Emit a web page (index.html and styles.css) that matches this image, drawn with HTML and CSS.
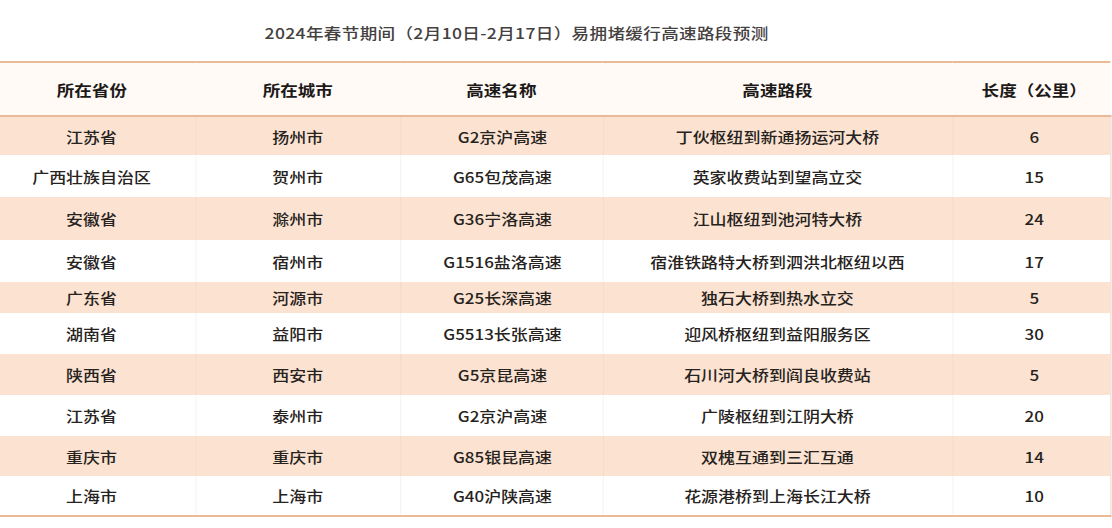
FILE: index.html
```html
<!DOCTYPE html>
<html lang="zh-CN">
<head>
<meta charset="utf-8">
<title>2024年春节期间易拥堵缓行高速路段预测</title>
<link rel="stylesheet" href="styles.css">
</head>
<body>
<div class="page">
  <h1 class="title">2024年春节期间（2月10日-2月17日）易拥堵缓行高速路段预测</h1>
  <table class="grid">
    <colgroup>
      <col class="c1"><col class="c2"><col class="c3"><col class="c4"><col class="c5">
    </colgroup>
    <thead>
      <tr class="head">
        <th class="p1">所在省份</th><th>所在城市</th><th>高速名称</th><th>高速路段</th><th class="p5">长度（公里）</th>
      </tr>
    </thead>
    <tbody>
      <tr class="odd h39"><td class="p1">江苏省</td><td>扬州市</td><td class="p3">G2京沪高速</td><td>丁伙枢纽到新通扬运河大桥</td><td class="p5">6</td></tr>
      <tr class="even h42"><td class="p1">广西壮族自治区</td><td>贺州市</td><td class="p3">G65包茂高速</td><td>英家收费站到望高立交</td><td class="p5">15</td></tr>
      <tr class="odd h43"><td class="p1">安徽省</td><td>滁州市</td><td class="p3">G36宁洛高速</td><td>江山枢纽到池河特大桥</td><td class="p5">24</td></tr>
      <tr class="even h42"><td class="p1">安徽省</td><td>宿州市</td><td class="p3">G1516盐洛高速</td><td>宿淮铁路特大桥到泗洪北枢纽以西</td><td class="p5">17</td></tr>
      <tr class="odd h31"><td class="p1">广东省</td><td>河源市</td><td class="p3">G25长深高速</td><td>独石大桥到热水立交</td><td class="p5">5</td></tr>
      <tr class="even h41"><td class="p1">湖南省</td><td>益阳市</td><td class="p3">G5513长张高速</td><td>迎风桥枢纽到益阳服务区</td><td class="p5">30</td></tr>
      <tr class="odd h41"><td class="p1">陕西省</td><td>西安市</td><td class="p3">G5京昆高速</td><td>石川河大桥到阎良收费站</td><td class="p5">5</td></tr>
      <tr class="even h41"><td class="p1">江苏省</td><td>泰州市</td><td class="p3">G2京沪高速</td><td>广陵枢纽到江阴大桥</td><td class="p5">20</td></tr>
      <tr class="odd h40"><td class="p1">重庆市</td><td>重庆市</td><td class="p3">G85银昆高速</td><td>双槐互通到三汇互通</td><td class="p5">14</td></tr>
      <tr class="even h40"><td class="p1">上海市</td><td>上海市</td><td class="p3">G40沪陕高速</td><td>花源港桥到上海长江大桥</td><td class="p5">10</td></tr>
    </tbody>
  </table>
</div>
</body>
</html>
```

FILE: styles.css
```css
html, body {
  margin: 0;
  padding: 0;
  background: #ffffff;
}

body {
  font-family: "Noto Sans CJK SC", "Noto Sans", sans-serif;
  color: #2e2a28;
}

/* the source image is stretched horizontally by ~1.17 */
.page {
  width: 949px;
  transform: scaleX(1.17);
  transform-origin: 0 0;
}

.title {
  margin: 0;
  height: 61px;
  box-sizing: border-box;
  padding: 22px 66px 0 0;
  text-align: center;
  font-size: 15px;
  font-weight: 500;
  line-height: 22px;
  color: #45413f;
  letter-spacing: 0.3px;
}

.grid {
  width: 949px;
  border-collapse: collapse;
  table-layout: fixed;
  border-top: 2px solid #e9b998;
  border-bottom: 2px solid #e9b998;
}

.c1 { width: 167px; }
.c2 { width: 175px; }
.c3 { width: 173px; }
.c4 { width: 299px; }
.c5 { width: 135px; }

th, td {
  padding: 0;
  text-align: center;
  white-space: nowrap;
}

.head {
  height: 54px;
  background: #fffaf6;
  border-bottom: 2px solid #e9b998;
}

th {
  font-weight: 700;
  font-size: 15px;
  color: #1c1918;
}

td {
  font-weight: 500;
  font-size: 14.5px;
  color: #262220;
  border-left: 1px solid #f3dccb;
}

td:first-child {
  border-left: none;
}

.even td {
  border-left-color: #faf3ee;
}

.odd { background: #fbe2d1; }
.even { background: #ffffff; }

td:last-child {
  border-right: 1px solid #f1d9c8;
}

.p1 { padding-right: 10px; }
.p3 { padding-left: 2px; }
.p5 { padding-left: 5px; }

.h31 { height: 31px; }
.h39 { height: 39px; }
.h40 { height: 40px; }
.h41 { height: 41px; }
.h42 { height: 42px; }
.h43 { height: 43px; }
```
